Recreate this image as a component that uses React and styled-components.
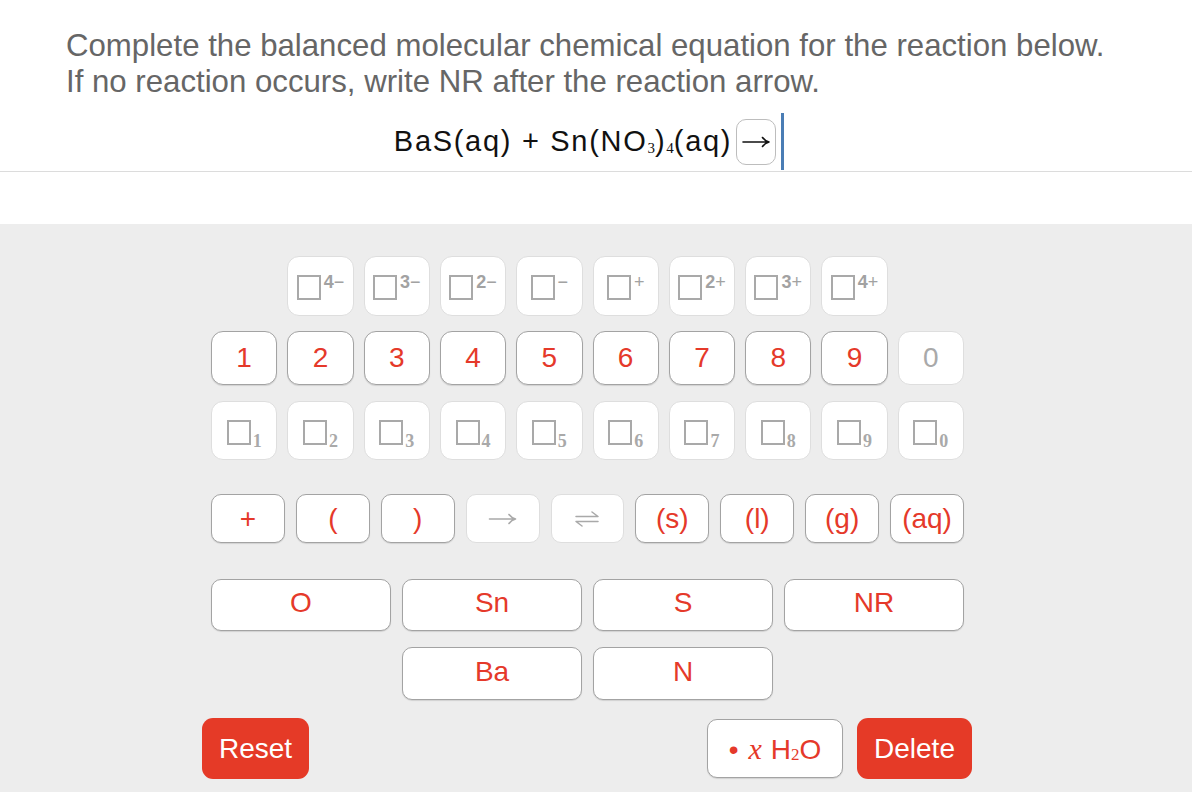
import React from "react";
import styled, { createGlobalStyle } from "styled-components";

const RED = "#e5392a";
const GREY = "#a9a9a9";

const GlobalStyle = createGlobalStyle`
  html, body {
    margin: 0;
    padding: 0;
    background: #ededed;
  }
  body {
    font-family: "Liberation Sans", Arial, sans-serif;
  }
`;

const Page = styled.div`
  width: 1192px;
  height: 792px;
  display: flex;
  flex-direction: column;
  background: #ededed;
  overflow: hidden;
`;

const Question = styled.div`
  background: #fff;
  padding-top: 28px;
  border-bottom: 1px solid #dcdcdc;
`;

const Prompt = styled.p`
  margin: 0;
  padding-left: 66px;
  font-size: 31.2px;
  line-height: 36px;
  color: #666;
`;

const EquationRow = styled.div`
  display: flex;
  justify-content: center;
  align-items: center;
  height: 59px;
  margin-top: 12px;
  padding-right: 14px;
`;

const Formula = styled.span`
  font-size: 29px;
  letter-spacing: 1.7px;
  color: #111;
`;

const Sub = styled.sub`
  font-family: "Liberation Serif", "Times New Roman", serif;
  font-size: ${(p) => p.$size || 15}px;
  letter-spacing: 0;
  vertical-align: ${(p) => p.$drop || -2}px;
  line-height: 0;
`;

const ArrowBox = styled.span`
  box-sizing: border-box;
  width: 40px;
  height: 46px;
  margin-left: 4px;
  border: 1px solid #bdbdbd;
  border-radius: 10px;
  display: flex;
  align-items: center;
  justify-content: center;
  color: #111;
`;

const Caret = styled.span`
  width: 3px;
  height: 57px;
  margin-left: 5px;
  background: #4a7db5;
`;

const WhiteGap = styled.div`
  height: 52px;
  background: #fff;
`;

const Keypad = styled.div`
  flex: 1;
  padding: 32px 0 0 211px;
`;

const Grid = styled.div`
  display: grid;
  width: 753px;
  grid-template-columns: repeat(${(p) => p.$cols}, 1fr);
  column-gap: ${(p) => p.$gap}px;
  margin-top: ${(p) => p.$top || 0}px;
`;

const Key = styled.button`
  box-sizing: border-box;
  height: ${(p) => p.$h}px;
  margin: 0;
  padding: 0 0 ${(p) => p.$lift || 0}px;
  grid-column-start: ${(p) => p.$col || "auto"};
  background: #fff;
  border-radius: ${(p) => p.$r || 12}px;
  border: 1px solid ${(p) => (p.$off ? "#dedede" : "#a3a3a3")};
  box-shadow: ${(p) => (p.$off ? "none" : "0 1px 1px rgba(0,0,0,0.12)")};
  display: flex;
  align-items: center;
  justify-content: center;
  font-family: "Liberation Sans", Arial, sans-serif;
  font-size: 28px;
  color: ${(p) => (p.$off ? GREY : RED)};
  cursor: pointer;
`;

const Square = styled.span`
  box-sizing: border-box;
  display: inline-block;
  width: 24px;
  height: 25px;
  border: 2px solid ${GREY};
`;

const ChargeLabel = styled.span`
  display: flex;
  align-items: flex-start;
  margin-top: 3px;
`;

const ChargeText = styled.span`
  margin-left: 3px;
  margin-top: 1px;
  font-size: 18px;
  line-height: 13px;
  color: #a2a2a2;
  b {
    font-weight: 700;
  }
`;

const SubLabel = styled.span`
  display: flex;
  align-items: flex-end;
  margin-top: 4px;
`;

const SubDigit = styled.span`
  margin: 0 0 -3px 2px;
  font-family: "Liberation Serif", "Times New Roman", serif;
  font-weight: bold;
  font-size: 18px;
  line-height: 13px;
  color: ${GREY};
`;

const BottomRow = styled.div`
  display: flex;
  align-items: center;
  width: 770px;
  margin: 18px 0 0 -9px;
`;

const RedButton = styled.button`
  box-sizing: border-box;
  width: ${(p) => p.$w}px;
  height: 61px;
  margin: 0 0 0 ${(p) => p.$ml || 0}px;
  padding: 0;
  border: none;
  border-radius: 11px;
  background: #e53a27;
  color: #fff;
  font-family: "Liberation Sans", Arial, sans-serif;
  font-size: 28px;
  cursor: pointer;
`;

const HydrateKey = styled(Key)`
  width: 136px;
  margin-left: auto;
`;

const HydrateText = styled.span`
  white-space: nowrap;
`;

const MathX = styled.i`
  font-family: "Liberation Serif", "DejaVu Serif", serif;
  font-size: 30px;
  margin: 0 9px 0 10px;
`;

const Arrow = ({ w = 28, color = "currentColor" }) => (
  <svg width={w} height="12" viewBox="0 0 28 12" fill="none">
    <path
      d="M1 6H27M20.5 1.5Q23 4.8 27 6Q23 7.2 20.5 10.5"
      stroke={color}
      strokeWidth="1.6"
      strokeLinecap="round"
      strokeLinejoin="round"
    />
  </svg>
);

const Equilibrium = ({ color }) => (
  <svg width="24" height="16" viewBox="0 0 24 16" fill="none">
    <path
      d="M1 5.5H23L17 1M23 10.5H1L7 15"
      stroke={color}
      strokeWidth="1.5"
      strokeLinecap="round"
      strokeLinejoin="round"
    />
  </svg>
);

const charges = [
  ["4", "−"],
  ["3", "−"],
  ["2", "−"],
  ["", "−"],
  ["", "+"],
  ["2", "+"],
  ["3", "+"],
  ["4", "+"],
];

const digits = ["1", "2", "3", "4", "5", "6", "7", "8", "9"];
const subs = ["1", "2", "3", "4", "5", "6", "7", "8", "9", "0"];

export default function App() {
  return (
    <Page>
      <GlobalStyle />
      <Question>
        <Prompt>
          Complete the balanced molecular chemical equation for the reaction below.
          <br />
          If no reaction occurs, write NR after the reaction arrow.
        </Prompt>
        <EquationRow>
          <Formula>
            BaS(aq) + Sn(NO<Sub>3</Sub>)<Sub>4</Sub>(aq)
          </Formula>
          <ArrowBox>
            <Arrow w={28} />
          </ArrowBox>
          <Caret />
        </EquationRow>
      </Question>
      <WhiteGap />

      <Keypad>
        <Grid $cols={10} $gap={10}>
          {charges.map(([n, s], i) => (
            <Key key={i} $h={60} $off $col={i === 0 ? 2 : undefined}>
              <ChargeLabel>
                <Square />
                <ChargeText>
                  <b>{n}</b>
                  {s}
                </ChargeText>
              </ChargeLabel>
            </Key>
          ))}
        </Grid>

        <Grid $cols={10} $gap={10} $top={15}>
          {digits.map((d) => (
            <Key key={d} $h={54}>
              {d}
            </Key>
          ))}
          <Key $h={54} $off>
            0
          </Key>
        </Grid>

        <Grid $cols={10} $gap={10} $top={16}>
          {subs.map((d) => (
            <Key key={d} $h={59} $off>
              <SubLabel>
                <Square />
                <SubDigit>{d}</SubDigit>
              </SubLabel>
            </Key>
          ))}
        </Grid>

        <Grid $cols={9} $gap={11} $top={34}>
          <Key $h={49} $r={10}>+</Key>
          <Key $h={49} $r={10}>(</Key>
          <Key $h={49} $r={10}>)</Key>
          <Key $h={49} $r={10} $off>
            <Arrow w={29} color={GREY} />
          </Key>
          <Key $h={49} $r={10} $off>
            <Equilibrium color={GREY} />
          </Key>
          <Key $h={49} $r={10}>(s)</Key>
          <Key $h={49} $r={10}>(l)</Key>
          <Key $h={49} $r={10}>(g)</Key>
          <Key $h={49} $r={10}>(aq)</Key>
        </Grid>

        <Grid $cols={4} $gap={11} $top={36}>
          <Key $h={52} $r={10} $lift={4}>O</Key>
          <Key $h={52} $r={10} $lift={4}>Sn</Key>
          <Key $h={52} $r={10} $lift={4}>S</Key>
          <Key $h={52} $r={10} $lift={4}>NR</Key>
        </Grid>

        <Grid $cols={4} $gap={11} $top={16}>
          <Key $h={53} $r={10} $col={2} $lift={4}>Ba</Key>
          <Key $h={53} $r={10} $lift={4}>N</Key>
        </Grid>

        <BottomRow>
          <RedButton $w={107}>Reset</RedButton>
          <HydrateKey $h={59} $r={10}>
            <HydrateText>
              •<MathX>x</MathX>H<Sub $size={17} $drop={-1}>2</Sub>O
            </HydrateText>
          </HydrateKey>
          <RedButton $w={115} $ml={14}>
            Delete
          </RedButton>
        </BottomRow>
      </Keypad>
    </Page>
  );
}
